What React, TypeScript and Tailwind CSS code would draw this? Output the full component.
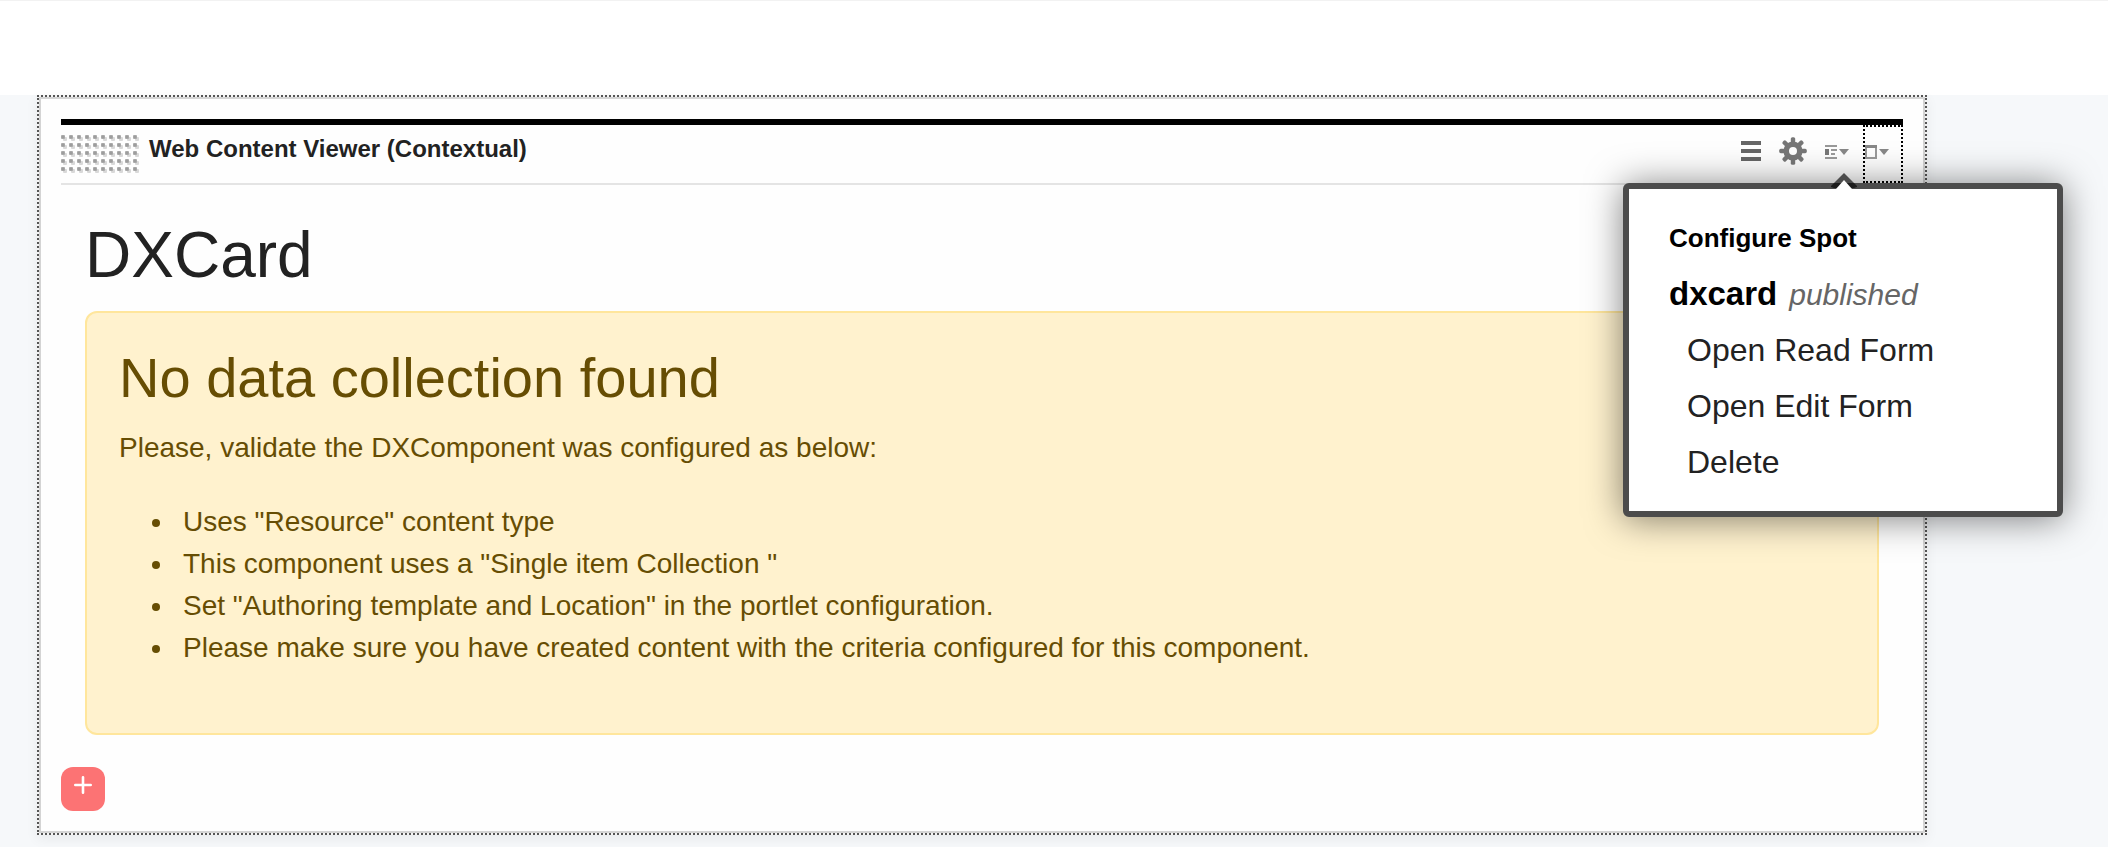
const menuItems = ["Open Read Form", "Open Edit Form", "Delete"];

const checks = [
  'Uses "Resource" content type',
  'This component uses a "Single item Collection "',
  'Set "Authoring template and Location" in the portlet configuration.',
  "Please make sure you have created content with the criteria configured for this component.",
];

function DragHandle() {
  return (
    <svg width="80" height="40" viewBox="0 0 80 40" aria-hidden="true">
      <defs>
        <pattern id="grip" width="8" height="8" patternUnits="userSpaceOnUse">
          <rect x="2" y="2" width="4" height="4" rx="1" fill="#d9d9d9" />
          <rect x="0" y="0" width="4" height="4" rx="1" fill="#a9a9a9" />
          <rect x="1" y="1" width="2" height="2" fill="#9d9d9d" />
        </pattern>
      </defs>
      <rect width="80" height="40" fill="url(#grip)" />
    </svg>
  );
}

function GearIcon() {
  const angles = [0, 45, 90, 135, 180, 225, 270, 315];
  return (
    <svg width="28" height="28" viewBox="-14 -14 28 28" aria-hidden="true">
      {angles.map((a) => (
        <rect key={a} x="-2.2" y="-13.8" width="4.4" height="8" rx="1.6" fill="#777777" transform={`rotate(${a})`} />
      ))}
      <circle r="6.8" fill="none" stroke="#777777" strokeWidth="5.6" />
    </svg>
  );
}

function SpotMenu() {
  return (
    <div className="absolute top-full -left-[202px] z-10 w-[440px] rounded-md border-6 border-[#4c4c4c] bg-white py-[21px] pl-10 shadow-[0_2px_36px_rgba(0,0,0,0.5)]">
      <svg className="absolute -top-4 left-[202px]" width="26" height="16" viewBox="0 0 26 16" aria-hidden="true">
        <path d="M13 0 L26 13 V15 H0 V13 Z" fill="#4c4c4c" />
        <path d="M3 10 H23 L26 13 V14 L23 15 H3 L0 14 V13 Z" fill="#1c1c1c" />
        <path d="M13 7 L21 16 H5 Z" fill="#ffffff" />
      </svg>
      <h2 className="text-[26px] leading-14 font-bold text-black">Configure Spot</h2>
      <p className="flex h-14 items-baseline gap-3 text-black">
        <strong className="text-[33px] leading-14 font-bold">dxcard</strong>
        <em className="text-[30px] leading-10 text-[#666666]">published</em>
      </p>
      <ul className="pl-[18px]">
        {menuItems.map((item) => (
          <li key={item} className="flex h-14">
            <button type="button" className="text-[32px] leading-14 text-[#222222]">
              {item}
            </button>
          </li>
        ))}
      </ul>
    </div>
  );
}

function PortletHeader() {
  return (
    <header className="flex h-[66px] justify-between border-t-6 border-b-2 border-t-black border-b-[#e4e4e4]">
      <div className="flex items-start gap-2 pt-[10px]">
        <DragHandle />
        <h2 className="text-2xl leading-7 font-bold">Web Content Viewer (Contextual)</h2>
      </div>
      <div className="flex items-stretch">
        <button type="button" aria-label="Menu" className="mr-[18px] flex items-center pb-[6px]">
          <svg width="20" height="20" viewBox="0 0 20 20" fill="#666666" aria-hidden="true">
            <rect y="0" width="20" height="4" />
            <rect y="8" width="20" height="4" />
            <rect y="16" width="20" height="4" />
          </svg>
        </button>
        <button type="button" aria-label="Settings" className="mr-[18px] flex items-center pb-[6px]">
          <GearIcon />
        </button>
        <div className="relative mr-[14px] flex">
          <button type="button" aria-label="Configure spot" className="flex items-center pb-1">
            <svg width="24" height="16" viewBox="0 0 24 16" aria-hidden="true">
              <path d="M0 1H12V3H0ZM0 13H12V15H0ZM6 5H12V7H6ZM6 9H10V11H6Z" fill="#999999" />
              <path d="M0 5H4V11H0Z" fill="#777777" />
              <path d="M14 5H24L19 11Z" fill="#888888" />
            </svg>
          </button>
          <SpotMenu />
        </div>
        <button type="button" aria-label="Window actions" className="flex w-10 items-center border-2 border-dotted border-black pb-1">
          <svg width="24" height="16" viewBox="0 0 24 16" aria-hidden="true">
            <path d="M1 2V14H11V2" fill="none" stroke="#999999" strokeWidth="2" />
            <rect y="1" width="12" height="3" fill="#888888" />
            <path d="M14 5H24L19 11Z" fill="#888888" />
          </svg>
        </button>
      </div>
    </header>
  );
}

export default function App() {
  return (
    <div className="min-h-screen bg-[#f6f8fa] pb-3 font-['Liberation_Sans',Arial,sans-serif] text-[#222222]">
      <div className="h-[95px] border-t border-[#f2f2f2] bg-white" />
      <main className="mr-[181px] ml-[37px] border-2 border-dotted border-[#555555] bg-[#f4f4f4] shadow-[0_4px_12px_rgba(0,0,0,0.06)]">
        <section className="border-2 border-[#d4d4d4] bg-[#fefefe] p-5">
          <PortletHeader />
          <div className="px-6 pt-8 pb-8">
            <h1 className="mb-[18px] text-[64px] leading-[76px]">DXCard</h1>
            <div role="alert" className="rounded-xl border-2 border-[#ffe69c] bg-[#fff2ce] p-8 text-[28px] leading-[42px] text-[#664d03]">
              <h2 className="mb-4 text-[56px] leading-[66px]">No data collection found</h2>
              <p className="mb-8">Please, validate the DXComponent was configured as below:</p>
              <ul className="mb-8 list-disc pl-14">
                {checks.map((text) => (
                  <li key={text} className="pl-2">
                    {text}
                  </li>
                ))}
              </ul>
            </div>
          </div>
          <button type="button" aria-label="Add content" className="flex size-11 items-start justify-center rounded-xl bg-[#fc7374] pt-[9px]">
            <svg width="18" height="18" viewBox="0 0 18 18" stroke="#ffffff" strokeWidth="2.6" strokeLinecap="round" aria-hidden="true">
              <path d="M9 1.3V16.7M1.3 9H16.7" />
            </svg>
          </button>
        </section>
      </main>
    </div>
  );
}
